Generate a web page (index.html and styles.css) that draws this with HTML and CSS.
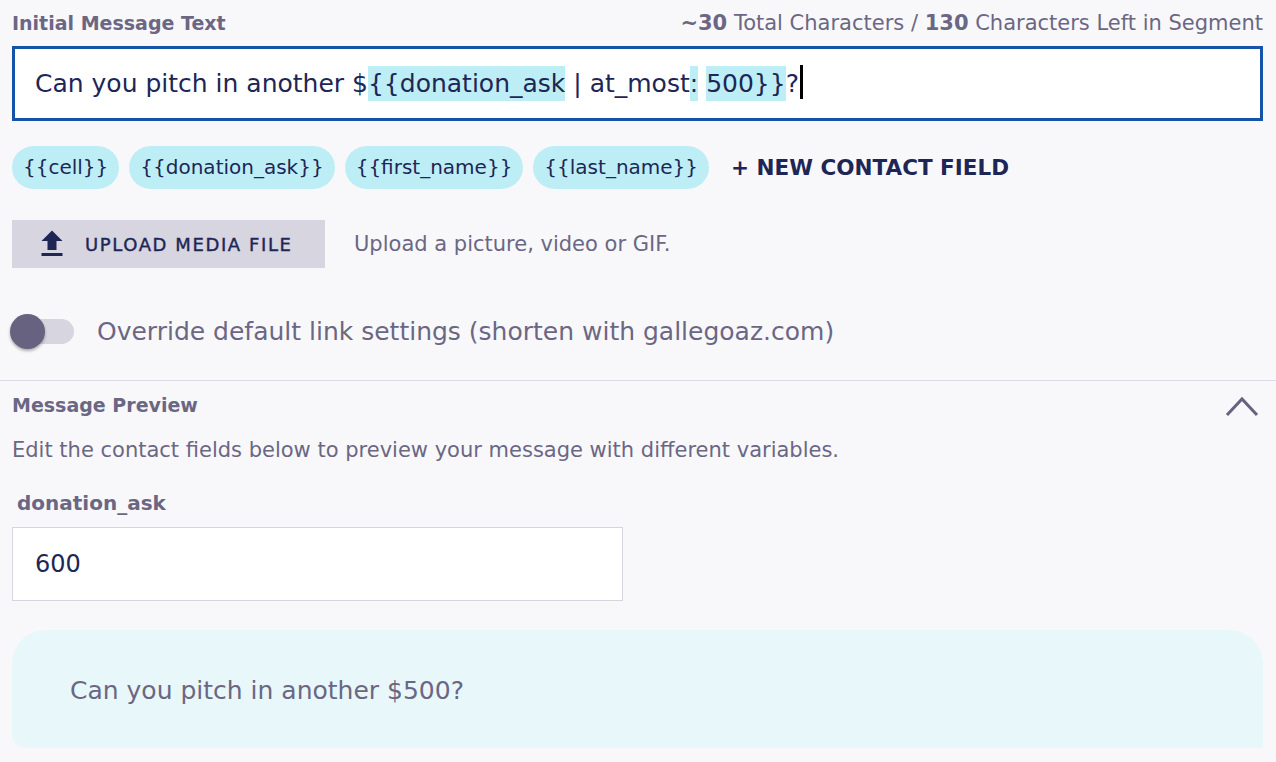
FILE: index.html
```html
<!DOCTYPE html>
<html>
<head>
<meta charset="utf-8">
<link rel="stylesheet" href="styles.css">
</head>
<body>
<div class="page">
  <div class="field-head">
    <span class="label">Initial Message Text</span>
    <span class="counter"><b>~30</b> Total Characters / <b>130</b> Characters Left in Segment</span>
  </div>
  <div class="msg-input"><span class="msg-text">Can you pitch in another $<span class="hl">{{donation_ask</span> | at_most<span class="hl">:</span> <span class="hl">500}}</span>?<span class="caret"></span></span></div>

  <div class="chips">
    <span class="chip">{{cell}}</span>
    <span class="chip">{{donation_ask}}</span>
    <span class="chip">{{first_name}}</span>
    <span class="chip">{{last_name}}</span>
    <span class="new-field">+ NEW CONTACT FIELD</span>
  </div>

  <div class="upload-row">
    <button class="upload-btn">
      <svg width="36" height="36" viewBox="0 0 24 24"><path d="M5 20h14v-2H5v2zm0-10h4v6h6v-6h4l-7-7-7 7z" fill="#1e2656"/></svg>
      <span>UPLOAD MEDIA FILE</span>
    </button>
    <span class="hint">Upload a picture, video or GIF.</span>
  </div>

  <div class="toggle-row">
    <span class="switch"><span class="track"></span><span class="knob"></span></span>
    <span class="toggle-label">Override default link settings (shorten with gallegoaz.com)</span>
  </div>
</div>

<div class="divider"></div>

<div class="page preview">
  <div class="preview-head">
    <span class="label">Message Preview</span>
    <svg class="chev" width="34" height="24" viewBox="0 0 34 24"><path d="M2 22 L17 6 L32 22" fill="none" stroke="#67627f" stroke-width="3"/></svg>
  </div>
  <p class="desc">Edit the contact fields below to preview your message with different variables.</p>
  <div class="var-label">donation_ask</div>
  <div class="var-input">600</div>
  <div class="bubble">Can you pitch in another $500?</div>
</div>
</body>
</html>
```

FILE: styles.css
```css
html, body {
  margin: 0;
  padding: 0;
  background: #f8f8fb;
  height: 762px;
  overflow: hidden;
}
body {
  font-family: "DejaVu Sans", "Noto Sans", sans-serif;
  color: #6b6783;
}
.page {
  padding: 0 13px 0 12px;
}
.field-head {
  display: flex;
  justify-content: space-between;
  align-items: center;
  height: 46px;
}
.label {
  font-size: 19px;
  font-weight: 600;
  color: #6b6783;
}
.counter {
  font-size: 21px;
  color: #6b6783;
}
.counter b { font-weight: 600; }
.msg-input {
  box-sizing: border-box;
  height: 75px;
  border: 3px solid #1552a8;
  background: #fff;
  padding: 0 20px 4px;
  display: flex;
  align-items: center;
  font-size: 25px;
  color: #1e2656;
}
.msg-text { white-space: pre; }
.hl {
  background: #bdeef5;
  padding: 3px 0;
}
.caret {
  display: inline-block;
  width: 3px;
  height: 34px;
  background: #000;
  margin-left: 1px;
  vertical-align: -7px;
}
.chips {
  display: flex;
  align-items: center;
  gap: 10px;
  margin-top: 25px;
}
.chip {
  height: 43px;
  line-height: 43px;
  border-radius: 22px;
  background: #bdeef5;
  color: #1e2656;
  font-size: 20px;
  padding: 0 11px;
}
.new-field {
  margin-left: 12px;
  font-size: 21.5px;
  font-weight: 600;
  color: #1e2656;
}
.upload-row {
  display: flex;
  align-items: center;
  margin-top: 31px;
  gap: 29px;
}
.upload-btn {
  display: flex;
  align-items: center;
  gap: 15px;
  height: 48px;
  width: 313px;
  border: none;
  background: #d6d5e0;
  padding: 0 0 0 22px;
  font-family: inherit;
  font-size: 18px;
  font-weight: 400;
  letter-spacing: 1.6px;
  color: #1e2656;
  -webkit-text-stroke: 0.4px #1e2656;
}
.hint {
  font-size: 21px;
  color: #6b6783;
}
.toggle-row {
  display: flex;
  align-items: center;
  margin-top: 40px;
  height: 46px;
}
.switch {
  position: relative;
  width: 76px;
  height: 35px;
  flex: none;
}
.track {
  position: absolute;
  left: 12px;
  top: 5px;
  width: 50px;
  height: 25px;
  border-radius: 13px;
  background: #d6d5e0;
}
.knob {
  position: absolute;
  left: -2px;
  top: 0;
  width: 35px;
  height: 35px;
  border-radius: 50%;
  background: #67627f;
  box-shadow: 0 2px 3px rgba(0,0,0,0.3);
}
.toggle-label {
  margin-left: 9px;
  font-size: 25px;
  color: #6b6783;
}
.divider {
  margin-top: 26px;
  height: 1px;
  background: #dddbe6;
}
.preview-head {
  display: flex;
  justify-content: space-between;
  align-items: center;
  height: 48px;
}
.chev { margin-right: 4px; }
.desc {
  margin: 0;
  font-size: 21px;
  line-height: 42px;
}
.var-label {
  margin-top: 19px;
  padding-left: 5px;
  font-size: 20px;
  font-weight: 600;
  line-height: 26px;
}
.var-input {
  box-sizing: border-box;
  margin-top: 11px;
  width: 611px;
  height: 74px;
  border: 1px solid #d6d5e0;
  background: #fff;
  padding-left: 22px;
  display: flex;
  align-items: center;
  font-size: 24px;
  color: #1e2656;
}
.bubble {
  box-sizing: border-box;
  margin-top: 29px;
  height: 118px;
  background: #e8f7f9;
  border-radius: 34px 34px 0 14px;
  padding-left: 58px;
  padding-top: 3px;
  display: flex;
  align-items: center;
  font-size: 25px;
  color: #6b6783;
}
```
